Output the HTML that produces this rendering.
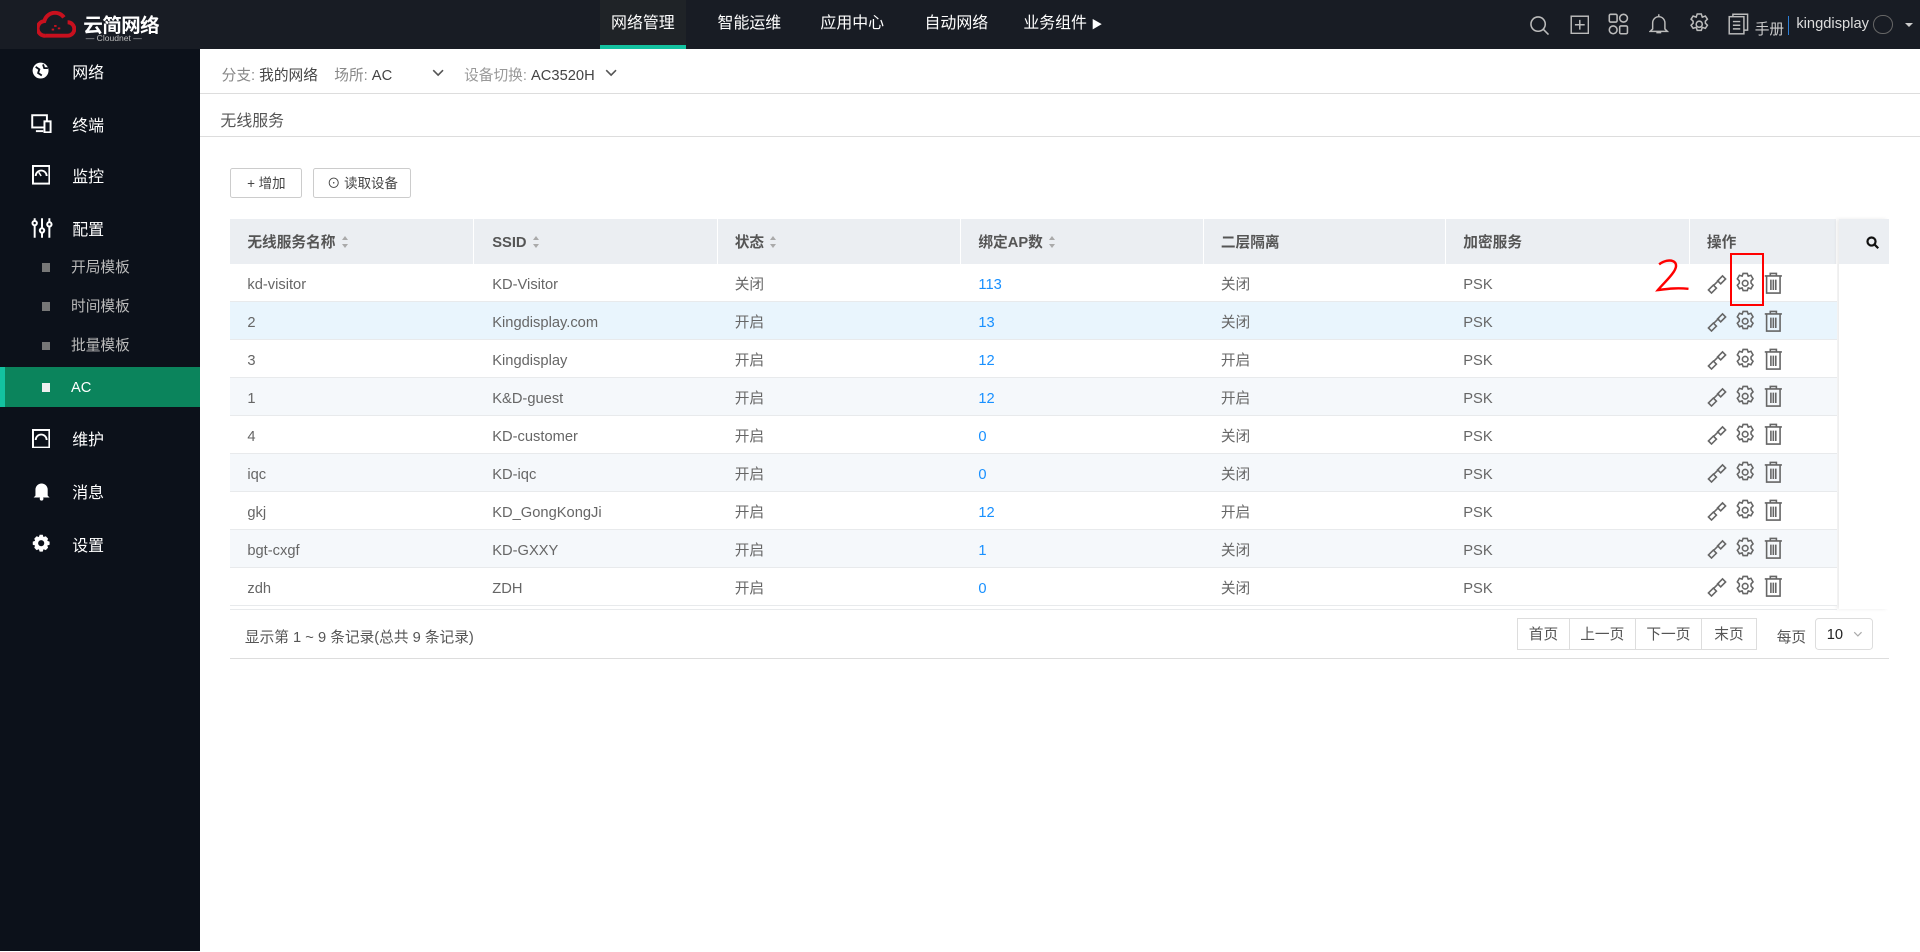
<!DOCTYPE html>
<html><head><meta charset="utf-8"><style>
*{margin:0;padding:0;box-sizing:border-box}
html,body{width:1920px;height:952px;overflow:hidden;background:#fff}
#w{zoom:1.22449;width:1568px;height:777px;position:relative;font-family:"Liberation Sans","Noto Sans CJK SC",sans-serif;font-size:12px;color:#666}
.a{position:absolute}
#top{left:0;top:0;width:1568px;height:40px;background:#181c24}
.tab{position:absolute;top:0;height:40px;line-height:40px;color:#fff;font-size:13px;text-align:center}
#side{left:0;top:40px;width:163px;height:737px;background:#0c111a}
.si{position:absolute;left:0;width:163px;color:#fff;font-size:13px}
.si .t{position:absolute;left:59px;top:-1px}
.sub{position:absolute;left:0;width:163px;color:#bbb;font-size:12px;height:32px;line-height:32px}
.sub b{position:absolute;left:34px;top:13px;width:7px;height:7px;background:#777}
.sub span{position:absolute;left:58px;top:1px}
.row{position:absolute;left:188px;width:1312px;height:31px;border-bottom:1px solid #e8eaec;line-height:31px}
.row span{position:absolute;top:2px}
.blue{color:#1890ff}
.hd{position:absolute;top:179px;height:37px;line-height:40px;background:#ebeef2;color:#555;font-weight:bold;border-right:1px solid #fff}
.srt{display:inline-block;margin-left:5px;vertical-align:middle;width:6px;height:10px;position:relative;top:-1px}
.srt:before{content:"";position:absolute;top:0;left:0;border:3px solid transparent;border-bottom:3.5px solid #aaa;border-top:0}
.srt:after{content:"";position:absolute;bottom:0;left:0;border:3px solid transparent;border-top:3.5px solid #aaa;border-bottom:0}
.row span.ops{position:absolute;left:1205px;top:5px;line-height:0}
.pg{position:absolute;top:505px;height:26px;line-height:27px;border:1px solid #ddd;text-align:center;color:#555;background:#fff}
</style></head><body><div id="w">
<div id="top" class="a">
 <svg class="a" style="left:30px;top:8px" width="32" height="24" viewBox="0 0 32 24"><path d="M7 21 A6 6 0 0 1 6 9 A9 9 0 0 1 22 6 M25 10 A5.5 5.5 0 0 1 25 21 L7 21" fill="none" stroke="#c8101e" stroke-width="3.2"/><path d="M14 13h2M17 15h2M12 16h2" stroke="#c8101e" stroke-width="1.5"/></svg>
 <div class="a" style="left:68px;top:7px;color:#fff;font-size:16px;font-weight:bold;letter-spacing:-0.5px">云简网络</div>
 <div class="a" style="left:70px;top:27px;color:#bbb;font-size:7px">— Cloudnet —</div>
 <div class="a" style="left:490px;top:0;width:70px;height:40px;background:#1f2327"></div>
 <div class="a" style="left:490px;top:37px;width:70px;height:3px;background:#13c2a0"></div>
 <div class="tab" style="left:490px;width:70px">网络管理</div>
 <div class="tab" style="left:577px;width:70px">智能运维</div>
 <div class="tab" style="left:661px;width:70px">应用中心</div>
 <div class="tab" style="left:746px;width:70px">自动网络</div>
 <div class="tab" style="left:833px;width:70px">业务组件 <span style="font-size:9px">▶</span></div>
 <svg class="a" style="left:1249px;top:12px" width="17" height="17" viewBox="0 0 16 16" fill="none" stroke="#bbb" stroke-width="1.2"><circle cx="7" cy="7" r="5.5"/><path d="M11 11l4 4"/></svg>
 <svg class="a" style="left:1282px;top:12px" width="16" height="16" viewBox="0 0 16 16" fill="none" stroke="#bbb" stroke-width="1.2"><rect x="1" y="1" width="14" height="14"/><path d="M8 4v8M4 8h8"/></svg>
 <svg class="a" style="left:1313px;top:11px" width="18" height="18" viewBox="0 0 17 17" fill="none" stroke="#bbb" stroke-width="1.2"><rect x="1" y="1" width="6" height="6" rx="1"/><circle cx="12" cy="4" r="3"/><circle cx="4" cy="13" r="3"/><rect x="9" y="10" width="6" height="6" rx="1"/></svg>
 <svg class="a" style="left:1347px;top:11px" width="16" height="18" viewBox="0 0 16 18" fill="none" stroke="#bbb" stroke-width="1.2"><path d="M3 13V8a5 5 0 0 1 10 0v5l2 2H1z M6 16h4M8 1v2"/></svg>
 <svg class="a" style="left:1378px;top:10px" width="20" height="20" viewBox="0 0 24 24" fill="none" stroke="#bbb" stroke-width="1.5"><circle cx="12" cy="12" r="3"/><path d="M10 2h4l1 3 3-1 2 3-2 2 0 2 2 2-2 3-3-1-1 3h-4l-1-3-3 1-2-3 2-2v-2l-2-2 2-3 3 1z"/></svg>
 <svg class="a" style="left:1411px;top:11px" width="18" height="18" viewBox="0 0 18 18" fill="none" stroke="#bbb" stroke-width="1.2"><rect x="1" y="3" width="12" height="14"/><path d="M4 3V1h12v13h-3M4 7h6M4 10h6M4 13h6"/></svg>
 <div class="a" style="left:1433px;top:15px;color:#ccc;font-size:12px">手册</div>
 <div class="a" style="left:1460px;top:13px;width:1px;height:16px;background:#2d7fd6"></div>
 <div class="a" style="left:1467px;top:13px;color:#ddd;font-size:12px">kingdisplay</div>
 <div class="a" style="left:1530px;top:12px;width:16px;height:16px;border-radius:50%;border:1px solid #666"></div>
 <div class="a" style="left:1556px;top:19px;border:4px solid transparent;border-top:4px solid #ccc"></div>
</div>
<div id="side" class="a">
 <div class="si" style="top:10px"><svg class="a" style="left:26px;top:1px" width="14" height="14" viewBox="0 0 14 14"><circle cx="7" cy="7" r="6.5" fill="#fff"/><path d="M3 4l3 2-1 3 3 2M9 2l1 3 3 0" stroke="#0c111a" stroke-width="1.5" fill="none"/></svg><span class="t">网络</span></div>
 <div class="si" style="top:53px"><svg class="a" style="left:25px;top:0" width="18" height="16" viewBox="0 0 18 16" fill="none" stroke="#fff" stroke-width="1.6"><rect x="1" y="1" width="12" height="10"/><path d="M4 14h6"/><rect x="11" y="6" width="5" height="9" fill="#0c111a"/></svg><span class="t">终端</span></div>
 <div class="si" style="top:95px"><svg class="a" style="left:26px;top:0" width="15" height="16" viewBox="0 0 15 16"><rect x="0.8" y="0.8" width="13.4" height="14.4" fill="none" stroke="#fff" stroke-width="1.6"/><path d="M3 9a4.5 4.5 0 0 1 9 0" stroke="#fff" stroke-width="1.5" fill="none"/><path d="M7.5 9l-2-3" stroke="#fff" stroke-width="1.2"/></svg><span class="t">监控</span></div>
 <div class="si" style="top:138px"><svg class="a" style="left:25px;top:-1px" width="18" height="18" viewBox="0 0 18 18" stroke="#fff" stroke-width="1.6" fill="none"><path d="M3 1v16M9 1v16M15 1v16"/><circle cx="3" cy="5" r="1.8" fill="#0c111a"/><circle cx="9" cy="11" r="1.8" fill="#0c111a"/><circle cx="15" cy="6" r="1.8" fill="#0c111a"/></svg><span class="t">配置</span></div>
 <div class="sub" style="top:162px"><b></b><span>开局模板</span></div>
 <div class="sub" style="top:194px"><b></b><span>时间模板</span></div>
 <div class="sub" style="top:226px"><b></b><span>批量模板</span></div>
 <div class="sub" style="top:260px;background:#0b845c;color:#fff;height:32px"><i style="position:absolute;left:0;top:0;width:4px;height:32px;background:#13c2a0"></i><b style="background:#eee"></b><span>AC</span></div>
 <div class="si" style="top:310px"><svg class="a" style="left:26px;top:0" width="15" height="16" viewBox="0 0 15 16"><rect x="0.8" y="0.8" width="13.4" height="14.4" fill="none" stroke="#fff" stroke-width="1.6"/><path d="M3 9a4.5 4.5 0 0 1 9 0" stroke="#fff" stroke-width="1.5" fill="none"/></svg><span class="t">维护</span></div>
 <div class="si" style="top:353px"><svg class="a" style="left:27px;top:0" width="14" height="16" viewBox="0 0 14 16"><path d="M2 12V7a5 5 0 0 1 10 0v5l1.5 1.5h-13z" fill="#fff"/><circle cx="7" cy="14.5" r="1.5" fill="#fff"/></svg><span class="t">消息</span></div>
 <div class="si" style="top:396px"><svg class="a" style="left:26px;top:0" width="15" height="15" viewBox="0 0 24 24"><path d="M10 1h4l1 3 3-1 3 3-1 3 3 1v4l-3 1 1 3-3 3-3-1-1 3h-4l-1-3-3 1-3-3 1-3-3-1v-4l3-1-1-3 3-3 3 1z" fill="#fff"/><circle cx="12" cy="12" r="4" fill="#0c111a"/></svg><span class="t">设置</span></div>
</div>
<div class="a" style="left:181px;top:52px;color:#888">分支: <span style="color:#444">我的网络</span>&nbsp;&nbsp;&nbsp;&nbsp;场所: <span style="color:#444">AC</span></div>
<svg class="a" style="left:353px;top:56px" width="10" height="7" viewBox="0 0 10 7"><path d="M1 1l4 4 4-4" stroke="#555" fill="none" stroke-width="1.3"/></svg>
<div class="a" style="left:379px;top:52px;color:#999">设备切换: <span style="color:#444">AC3520H</span></div>
<svg class="a" style="left:494px;top:56px" width="10" height="7" viewBox="0 0 10 7"><path d="M1 1l4 4 4-4" stroke="#555" fill="none" stroke-width="1.3"/></svg>
<div class="a" style="left:163px;top:76px;width:1405px;height:1px;background:#ddd"></div>
<div class="a" style="left:180px;top:88px;font-size:13px;color:#555">无线服务</div>
<div class="a" style="left:163px;top:111px;width:1405px;height:1px;background:#ddd"></div>
<div class="a" style="left:188px;top:137px;width:59px;height:25px;border:1px solid #ccc;border-radius:2px;line-height:25px;text-align:center;color:#444;font-size:11px">+ 增加</div>
<div class="a" style="left:256px;top:137px;width:80px;height:25px;border:1px solid #ccc;border-radius:2px;line-height:25px;text-align:center;color:#444;font-size:11px">⊙ 读取设备</div>
<div class="hd" style="left:188px;width:199px;padding-left:14px">无线服务名称<i class="srt"></i></div>
<div class="hd" style="left:387px;width:199px;padding-left:15px">SSID<i class="srt"></i></div>
<div class="hd" style="left:586px;width:199px;padding-left:14px">状态<i class="srt"></i></div>
<div class="hd" style="left:785px;width:198px;padding-left:14px">绑定AP数<i class="srt"></i></div>
<div class="hd" style="left:983px;width:198px;padding-left:14px">二层隔离</div>
<div class="hd" style="left:1181px;width:199px;padding-left:14px">加密服务</div>
<div class="hd" style="left:1380px;width:120px;padding-left:14px">操作</div>
<div class="a" style="left:1502px;top:179px;width:41px;height:318px;background:#fff;box-shadow:-2px 0 3px rgba(0,0,0,.08)"></div>
<div class="a" style="left:1502px;top:179px;width:41px;height:37px;background:#ebeef2"></div>
<svg class="a" style="left:1524px;top:193px" width="11" height="11" viewBox="0 0 11 11" stroke="#111" stroke-width="1.8" fill="none"><circle cx="4.5" cy="4.5" r="3.3"/><path d="M7 7l3 3"/></svg>
<div id="rows"></div>
<script>
var d=[["kd-visitor","KD-Visitor","关闭","113","关闭","#fff"],["2","Kingdisplay.com","开启","13","关闭","#e9f5fd"],["3","Kingdisplay","开启","12","开启","#fff"],["1","K&amp;D-guest","开启","12","开启","#f5f8fb"],["4","KD-customer","开启","0","关闭","#fff"],["iqc","KD-iqc","开启","0","关闭","#f5f8fb"],["gkj","KD_GongKongJi","开启","12","开启","#fff"],["bgt-cxgf","KD-GXXY","开启","1","关闭","#f5f8fb"],["zdh","ZDH","开启","0","关闭","#fff"]];
var ic='<svg width="70" height="20" viewBox="0 0 70 20" fill="none" stroke="#666" stroke-width="1.3"><path d="M2 15.5l4-4 2.5 2.5-4 4zM9.5 8l4-4 2.5 2.5-4 4zM6.5 11.5l4-4"/><circle cx="32" cy="10" r="2.3"/><path d="M30.3 2h3.4l.8 2.2 2.2-.7 1.7 2.9-1.6 1.7v1.8l1.6 1.7-1.7 2.9-2.2-.7-.8 2.2h-3.4l-.8-2.2-2.2.7-1.7-2.9 1.6-1.7v-1.8l-1.6-1.7 1.7-2.9 2.2.7z"/><path d="M48 4h14M52.5 4V2h5v2M49.5 4v14h11V4M53 7v8.5M55 7v8.5M57 7v8.5"/></svg>';
var h='';
for(var i=0;i<d.length;i++){var r=d[i];var y=216+i*31;
h+='<div class="row" style="top:'+y+'px;background:'+r[5]+'"><span style="left:14px">'+r[0]+'</span><span style="left:214px">'+r[1]+'</span><span style="left:412px">'+r[2]+'</span><span class="blue" style="left:611px">'+r[3]+'</span><span style="left:809px">'+r[4]+'</span><span style="left:1007px">PSK</span><span class="ops">'+ic+'</span></div>';}
document.getElementById('rows').innerHTML=h;
</script>
<div class="a" style="left:1413px;top:207px;width:28px;height:43px;border:2px solid #f00"></div>
<svg class="a" style="left:1350px;top:210px" width="40" height="30" viewBox="0 0 40 30"><path d="M5 6c8-6 18-3 12 6-4 6-9 10-13 15 8-1 15-2 25-1" stroke="#f00" stroke-width="2" fill="none"/></svg>
<div class="a" style="left:188px;top:497px;width:1312px;height:1px;background:#e8eaec"></div>
<div class="a" style="left:200px;top:511px;color:#555">显示第 1 ~ 9 条记录(总共 9 条记录)</div>
<div class="pg" style="left:1239px;width:43px">首页</div>
<div class="pg" style="left:1281px;width:55px">上一页</div>
<div class="pg" style="left:1335px;width:55px">下一页</div>
<div class="pg" style="left:1389px;width:46px">末页</div>
<div class="a" style="left:1451px;top:511px;color:#555">每页</div>
<div class="a" style="left:1482px;top:505px;width:48px;height:26px;border:1px solid #ddd;border-radius:3px;line-height:27px;padding-left:9px;color:#222">10</div>
<svg class="a" style="left:1513px;top:515px" width="8" height="5" viewBox="0 0 8 5"><path d="M1 1l3 3 3-3" stroke="#aaa" fill="none"/></svg>
<div class="a" style="left:188px;top:537px;width:1355px;height:1px;background:#ddd"></div>
</div></body></html>
